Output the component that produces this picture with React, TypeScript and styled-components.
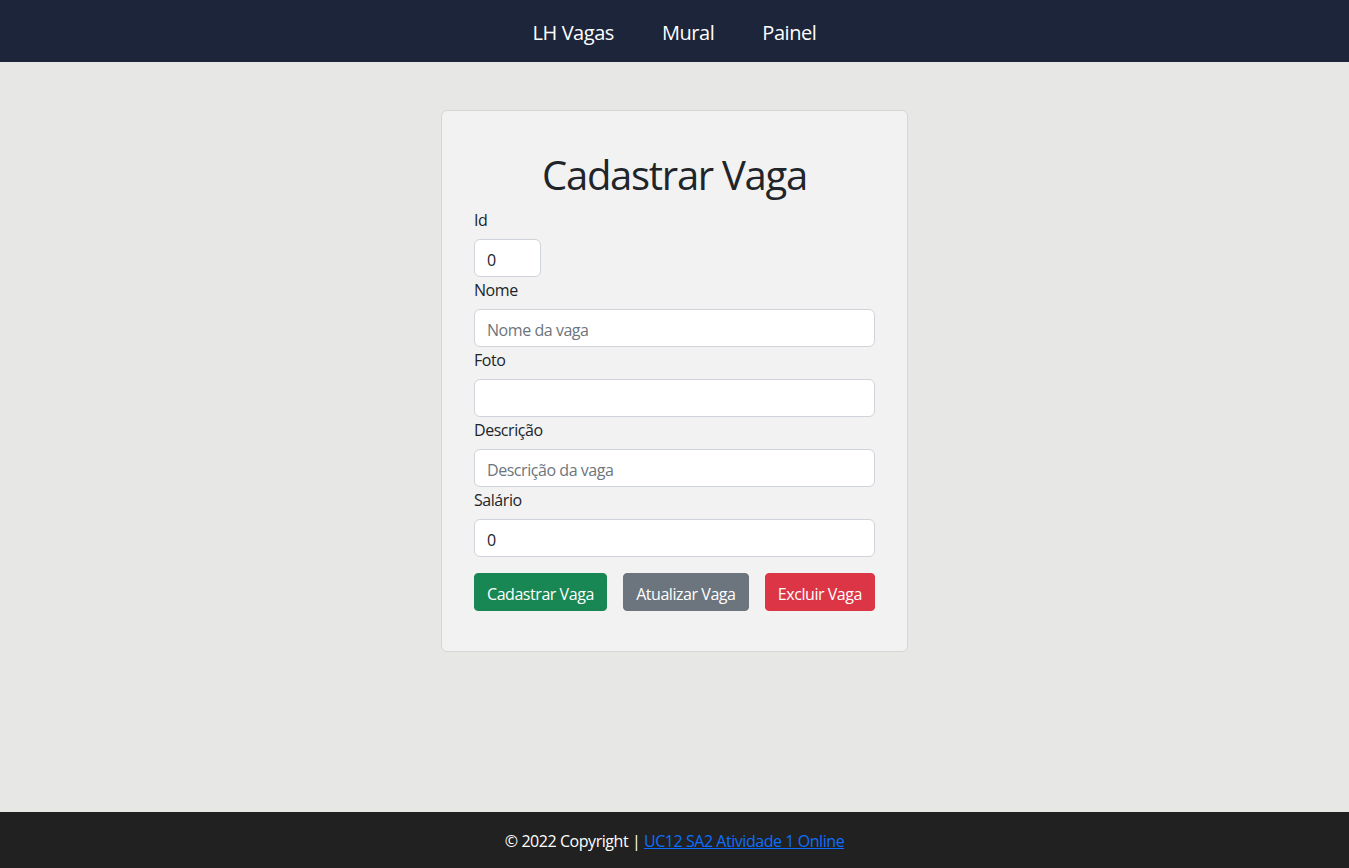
import React from "react";
import styled, { createGlobalStyle } from "styled-components";

const GlobalStyle = createGlobalStyle`
  * { box-sizing: border-box; }
  html, body { margin: 0; padding: 0; }
  body {
    font-family: "Segoe UI", "Open Sans", "Noto Sans", sans-serif;
    font-size: 16px;
    line-height: 1.5;
    letter-spacing: -0.028em;
    color: #212529;
    background: #e7e7e5;
  }
`;

const Page = styled.div`
  min-height: 100vh;
  display: flex;
  flex-direction: column;
`;

const Header = styled.header`
  height: 62px;
  background: #1c2539;
  display: flex;
  align-items: center;
  justify-content: center;
`;

const Nav = styled.nav`
  display: flex;
  gap: 48px;
  padding-top: 3px;
`;

const NavLink = styled.a`
  color: #ffffff;
  font-size: 20px;
  text-decoration: none;
  cursor: pointer;
`;

const Main = styled.main`
  flex: 1;
  display: flex;
  justify-content: center;
  align-items: flex-start;
  padding-top: 48px;
`;

const Card = styled.section`
  width: 467px;
  background: #f2f2f2;
  border: 1px solid #d6d6d6;
  border-radius: 6px;
  padding: 40px 32px;
`;

const Title = styled.h1`
  margin: 0 0 8px;
  font-size: 40px;
  font-weight: 400;
  line-height: 1.2;
  letter-spacing: -0.032em;
  text-align: center;
`;

const Field = styled.div`
  display: flex;
  flex-direction: column;
  align-items: flex-start;
`;

const Label = styled.label`
  padding-top: 1px;
  margin-bottom: 7px;
`;

const Input = styled.input<{ $narrow?: boolean }>`
  width: ${(p) => (p.$narrow ? "67px" : "100%")};
  height: 38px;
  padding: 8px 12px 4px;
  font: inherit;
  letter-spacing: inherit;
  color: #212529;
  background: #fff;
  border: 1px solid #ced4da;
  border-radius: 6px;
  outline: none;
  &::placeholder { color: #6c757d; opacity: 1; }
`;

const Actions = styled.div`
  display: flex;
  justify-content: space-between;
  margin-top: 16px;
`;

const Button = styled.button<{ $bg: string }>`
  height: 38px;
  padding: 8px 12px 4px;
  font: inherit;
  letter-spacing: inherit;
  color: #fff;
  background: ${(p) => p.$bg};
  border: 1px solid ${(p) => p.$bg};
  border-radius: 4px;
  cursor: pointer;
`;

const Footer = styled.footer`
  height: 56px;
  background: #212121;
  color: #fff;
  display: flex;
  align-items: center;
  justify-content: center;
  padding-top: 2px;
`;

const FooterLink = styled.a`
  color: #0d6efd;
  text-decoration: underline;
`;

export default function App() {
  return (
    <Page>
      <GlobalStyle />
      <Header>
        <Nav>
          <NavLink>LH Vagas</NavLink>
          <NavLink>Mural</NavLink>
          <NavLink>Painel</NavLink>
        </Nav>
      </Header>
      <Main>
        <Card>
          <Title>Cadastrar Vaga</Title>
          <Field>
            <Label>Id</Label>
            <Input $narrow defaultValue="0" readOnly />
          </Field>
          <Field>
            <Label>Nome</Label>
            <Input placeholder="Nome da vaga" />
          </Field>
          <Field>
            <Label>Foto</Label>
            <Input />
          </Field>
          <Field>
            <Label>Descrição</Label>
            <Input placeholder="Descrição da vaga" />
          </Field>
          <Field>
            <Label>Salário</Label>
            <Input defaultValue="0" />
          </Field>
          <Actions>
            <Button $bg="#198754">Cadastrar Vaga</Button>
            <Button $bg="#6c757d">Atualizar Vaga</Button>
            <Button $bg="#dc3545">Excluir Vaga</Button>
          </Actions>
        </Card>
      </Main>
      <Footer>
        <span>
          © 2022 Copyright | <FooterLink href="#">UC12 SA2 Atividade 1 Online</FooterLink>
        </span>
      </Footer>
    </Page>
  );
}
